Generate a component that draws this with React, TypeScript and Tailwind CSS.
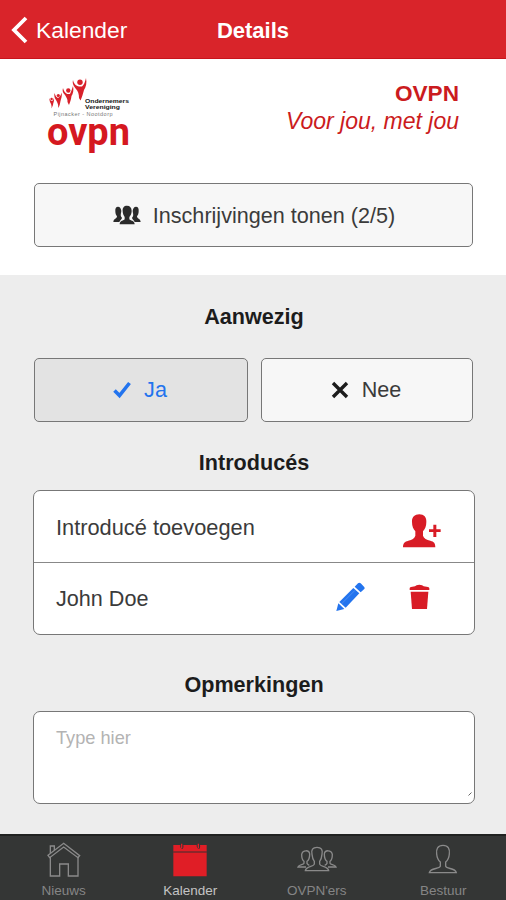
import React, { useState } from 'react';

const PersonAddIcon = () => (
  <svg width="38" height="34" viewBox="248 87 114 102" fill="#d81c26">
    <path d="M297 88C283 88 274 97 275 111C275 124 279 132 285 139V152C283 160 275 164 264 167C253 170 248 174 248 187H345C345 174 341 170 330 167C319 164 310 160 308 152V139C314 132 318 124 318 111C319 97 311 88 297 88Z" />
    <path d="M339 119h9v14h13v8h-13v15h-9v-15h-13v-8h13z" />
  </svg>
);

const GroupIcon = () => (
  <svg width="28" height="20" viewBox="277 86 84 60" fill="#2b2b2b">
    <path d="M292 91C286 91 283 97 284 105C284 112 286 117 289 120C289 128 279 126 278 137H296C298 130 304 129 304 124C298 119 301 112 302 104C301 96 298 91 292 91Z" />
    <path d="M346 91C352 91 355 97 354 105C354 112 352 117 349 120C349 128 359 126 360 137H342C340 130 334 129 334 124C340 119 337 112 336 104C337 96 340 91 346 91Z" />
    <path d="M319 88C310 88 305 94 306 104C306 112 309 118 312 122V128C310 134 297 131 297 144H342C342 131 328 134 326 128V122C330 118 333 112 333 104C333 94 328 88 319 88Z" />
  </svg>
);

const PencilIcon = () => (
  <svg width="29" height="30" viewBox="46 291 87 90" fill="#2374ee">
    <path d="M47 378L53 355L71 372Z" />
    <path d="M56 351L98 309L116 325L75 368Z" />
    <path d="M102 305L112 295Q116 291 120 295L130 305Q134 309 130 313L120 322Z" />
    <path d="M62 357L103 316" stroke="#5c98f3" strokeWidth="2" />
  </svg>
);

const TrashIcon = () => (
  <svg width="21" height="26" viewBox="266 297 63 78" fill="#d81c26">
    <path d="M268 315V310Q268 307 272 306L284 304Q287 299 297 299Q307 299 310 304L323 306Q327 307 327 310V315Z" />
    <path d="M271 320H324L320 372H275Z" />
  </svg>
);

const HomeIcon = () => (
  <svg width="34" height="36" viewBox="141 49 102 108" fill="none" stroke="#8a8a8a" strokeWidth="4">
    <path d="M151 93V151H179V115H205V151H234V93" />
    <path d="M144 89L191 53L239 90L234 96L191 64L149 96Z" />
    <path d="M151 82V61H163V73" />
  </svg>
);

const CalendarIcon = () => (
  <svg width="34" height="36" viewBox="520 49 102 108">
    <path d="M521 58H542Q540 68 549 70Q553 65 551 58H591Q590 68 599 70Q603 65 601 58H621V77H521Z" fill="#e01e26" />
    <path d="M521 81H621V152H521Z" fill="#e01e26" />
    <path d="M521 79H621" stroke="#9d2429" strokeWidth="4" />
    <path d="M546 54V68M596 54V68" stroke="#e01e26" strokeWidth="4" />
  </svg>
);

const MembersIcon = () => (
  <svg width="40" height="36" viewBox="132 49 120 108" fill="none" stroke="#8a8a8a" strokeWidth="4">
    <path d="M192 65C179 65 174 73 177 86C178 97 181 103 184 107V115C183 124 159 120 157 135H227C225 120 201 124 200 115V107C203 103 206 97 207 86C210 73 205 65 192 65Z" />
    <path d="M170 85C169 72 149 72 146 86C146 97 148 104 153 107V113C151 118 138 116 135 124H159M170 85C170 98 167 104 162 107V113Q164 117 169 119" />
    <path d="M214 85C215 72 235 72 238 86C238 97 236 104 231 107V113C233 118 246 116 249 124H225M214 85C214 98 217 104 222 107V113Q220 117 215 119" />
  </svg>
);

const PersonIcon = () => (
  <svg width="30" height="36" viewBox="527 49 90 108" fill="none" stroke="#8a8a8a" strokeWidth="4">
    <path d="M572 59C556 59 551 70 553 85C554 97 559 105 564 109V122C560 131 534 126 531 141H612C609 126 583 131 580 122V109C585 105 590 97 591 85C593 70 588 59 572 59Z" />
  </svg>
);

// Cheering figures above the wordmark
const Logo = () => (
  <svg width="90" height="84" viewBox="0 0 90 84">
    <g fill="#d8202a">
      <circle cx="34" cy="10.3" r="2.7" />
      <path d="M27 8C28 13 31 14 33 14.5H36C38 13 39 10 40 6C41 11 40 15 38 18C37 22 36 25 34.5 28.5L33 26C33 22 32 19 30 17C28 14 26 12 27 8Z" />
      <circle cx="22.3" cy="18.5" r="2.2" />
      <path d="M17 16C18 20 20 21 21 22H24C25 20 26 17 27 14C28 18 27 22 25.5 24C25 28 24 30 23 33L21.5 30C22 27 20 25 19 23C17 21 16 19 17 16Z" />
      <circle cx="12.3" cy="23.5" r="1.6" />
      <path d="M8.5 21C9.5 24.5 11 25.5 12 26C14 25 15 23 15.5 20.5C16.5 24 15 27 14.5 29C14 32 13.5 34 12.3 36C12.5 32 11 30 10 28C8.5 26 8 24 8.5 21Z" />
      <circle cx="5.6" cy="27" r="1.2" />
      <path d="M3 26C4 28 5 29 6 29C7 28.5 7.5 27.5 8 26C8.5 29 7 31 7 33L5.5 36.5C6 33 4.5 31 4 30Z" />
    </g>
    <text x="39" y="30.5" textLength="44" lengthAdjust="spacingAndGlyphs" fontFamily="Liberation Sans, sans-serif" fontSize="6" fontWeight="700" fill="#151515">Ondernemers</text>
    <text x="39" y="36.5" textLength="35" lengthAdjust="spacingAndGlyphs" fontFamily="Liberation Sans, sans-serif" fontSize="6" fontWeight="700" fill="#151515">Vereniging</text>
    <text x="7.5" y="44" textLength="59" lengthAdjust="spacing" fontFamily="Liberation Sans, sans-serif" fontSize="5.5" fill="#777">Pijnacker - Nootdorp</text>
    <text x="1" y="73" textLength="83" lengthAdjust="spacingAndGlyphs" fontFamily="Roboto, sans-serif" fontSize="38" fontWeight="700" fill="#d51820">ovpn</text>
  </svg>
);

const tabs = [
  { label: 'Nieuws', icon: <HomeIcon /> },
  { label: 'Kalender', icon: <CalendarIcon /> },
  { label: "OVPN'ers", icon: <MembersIcon /> },
  { label: 'Bestuur', icon: <PersonIcon /> },
];

export default function App() {
  const [attending, setAttending] = useState(true);
  const [remarks, setRemarks] = useState('');
  const [activeTab, setActiveTab] = useState('Kalender');

  return (
    <div className="flex h-[900px] w-[506px] flex-col overflow-hidden bg-[#ededed] font-['Liberation_Sans',sans-serif] text-[21.6px] leading-6 text-[#3b3b3b]">
      {/* Header */}
      <header className="grid h-[59px] shrink-0 grid-cols-3 items-center border-b border-[#c8141c] bg-[#d9242a] pt-0.5 text-white">
        <button className="flex items-center pl-[11px] text-[22.8px]">
          <svg width="17" height="28" viewBox="0 0 17 28" fill="none" stroke="currentColor" strokeWidth="3.8">
            <path d="M15 2L3 14L15 26" />
          </svg>
          <span className="ml-2">Kalender</span>
        </button>
        <h1 className="pt-px text-center text-[22px] font-bold">Details</h1>
      </header>

      {/* Event intro */}
      <section className="h-[216px] shrink-0 bg-white pl-[34px] pr-[33px]">
        <div className="flex h-[124px] justify-between pl-3 pr-3.5 pt-[13px]">
          <Logo />
          <div className="pt-2 text-right text-[22.6px] leading-7 text-[#cb1b20]">
            <div className="font-bold">OVPN</div>
            <div className="-mt-px text-[23px] italic">Voor jou, met jou</div>
          </div>
        </div>
        <button className="flex h-16 w-full items-center justify-center gap-3 rounded-[5px] border border-[#777] bg-[#f7f7f7] pl-px">
          <GroupIcon />
          <span className="pt-0.5">Inschrijvingen tonen (2/5)</span>
        </button>
      </section>

      <main className="flex-1 pl-[33px] pr-[31px]">
        <h2 className="pt-[30px] text-center font-bold text-[#1c1c1c]">Aanwezig</h2>
        <div className="mt-[29px] flex h-16 gap-[13px] pl-px pr-0.5">
          <button
            onClick={() => setAttending(true)}
            className={`flex w-[214px] items-center justify-center gap-[13px] rounded-[5px] border border-[#777] pr-0.5 ${attending ? 'bg-[#e3e3e3] text-[#2374ee]' : 'bg-[#f7f7f7]'}`}
          >
            <svg width="18" height="18" viewBox="0 0 18 18" fill="none" stroke={attending ? '#2374ee' : '#1c1c1c'} strokeWidth="3.6">
              <path d="M1.5 9.5L6.5 14.5L16.5 2" />
            </svg>
            <span>Ja</span>
          </button>
          <button
            onClick={() => setAttending(false)}
            className={`flex flex-1 items-center justify-center gap-[13px] rounded-[5px] border border-[#777] pr-0.5 ${attending ? 'bg-[#f7f7f7]' : 'bg-[#e3e3e3] text-[#2374ee]'}`}
          >
            <svg width="18" height="18" viewBox="0 0 18 18" fill="none" stroke={attending ? '#1c1c1c' : '#2374ee'} strokeWidth="3.4">
              <path d="M2 2L16 16M16 2L2 16" />
            </svg>
            <span>Nee</span>
          </button>
        </div>

        <h2 className="mt-[29px] text-center font-bold text-[#1c1c1c]">Introducés</h2>
        <div className="mt-[15px] rounded-[7px] border border-[#777] bg-white">
          <div className="flex h-[72px] items-center justify-between border-b border-[#888] pl-[22px] pr-[33px] pt-1">
            <span className="-mt-0.5 text-[21.8px]">Introducé toevoegen</span>
            <button className="mt-1"><PersonAddIcon /></button>
          </div>
          <div className="flex h-[71px] items-center pl-[22px] pr-[44px]">
            <span className="flex-1 pt-px">John Doe</span>
            <button className="-mt-1 mr-px"><PencilIcon /></button>
            <button className="-mt-1 ml-[43px]"><TrashIcon /></button>
          </div>
        </div>

        <h2 className="mt-[38px] text-center font-bold text-[#1c1c1c]">Opmerkingen</h2>
        <div className="relative mt-[14px]">
          <textarea
            value={remarks}
            onChange={(e) => setRemarks(e.target.value)}
            placeholder="Type hier"
            className="block h-[93px] w-full resize-none rounded-[7px] border border-[#777] bg-white px-[22px] pt-[14px] text-[18.2px] placeholder:text-[#b3b3b3]"
          />
          {/* Resize grip */}
          <svg className="pointer-events-none absolute bottom-2 right-[3px]" width="4" height="4" viewBox="0 0 4 4" stroke="#666">
            <path d="M0.5 3.5L3.5 0.5" />
          </svg>
        </div>
      </main>

      {/* Tab bar */}
      <nav className="grid h-[66px] shrink-0 grid-cols-4 border-t-2 border-[#202221] bg-[#343635] text-[13.5px] leading-4">
        {tabs.map((tab) => (
          <button
            key={tab.label}
            onClick={() => setActiveTab(tab.label)}
            className={`flex flex-col items-center pl-px pt-1.5 ${activeTab === tab.label ? 'text-[#c4c4c4]' : 'text-[#858585]'}`}
          >
            {tab.icon}
            <span className="mt-[5px]">{tab.label}</span>
          </button>
        ))}
      </nav>
    </div>
  );
}
